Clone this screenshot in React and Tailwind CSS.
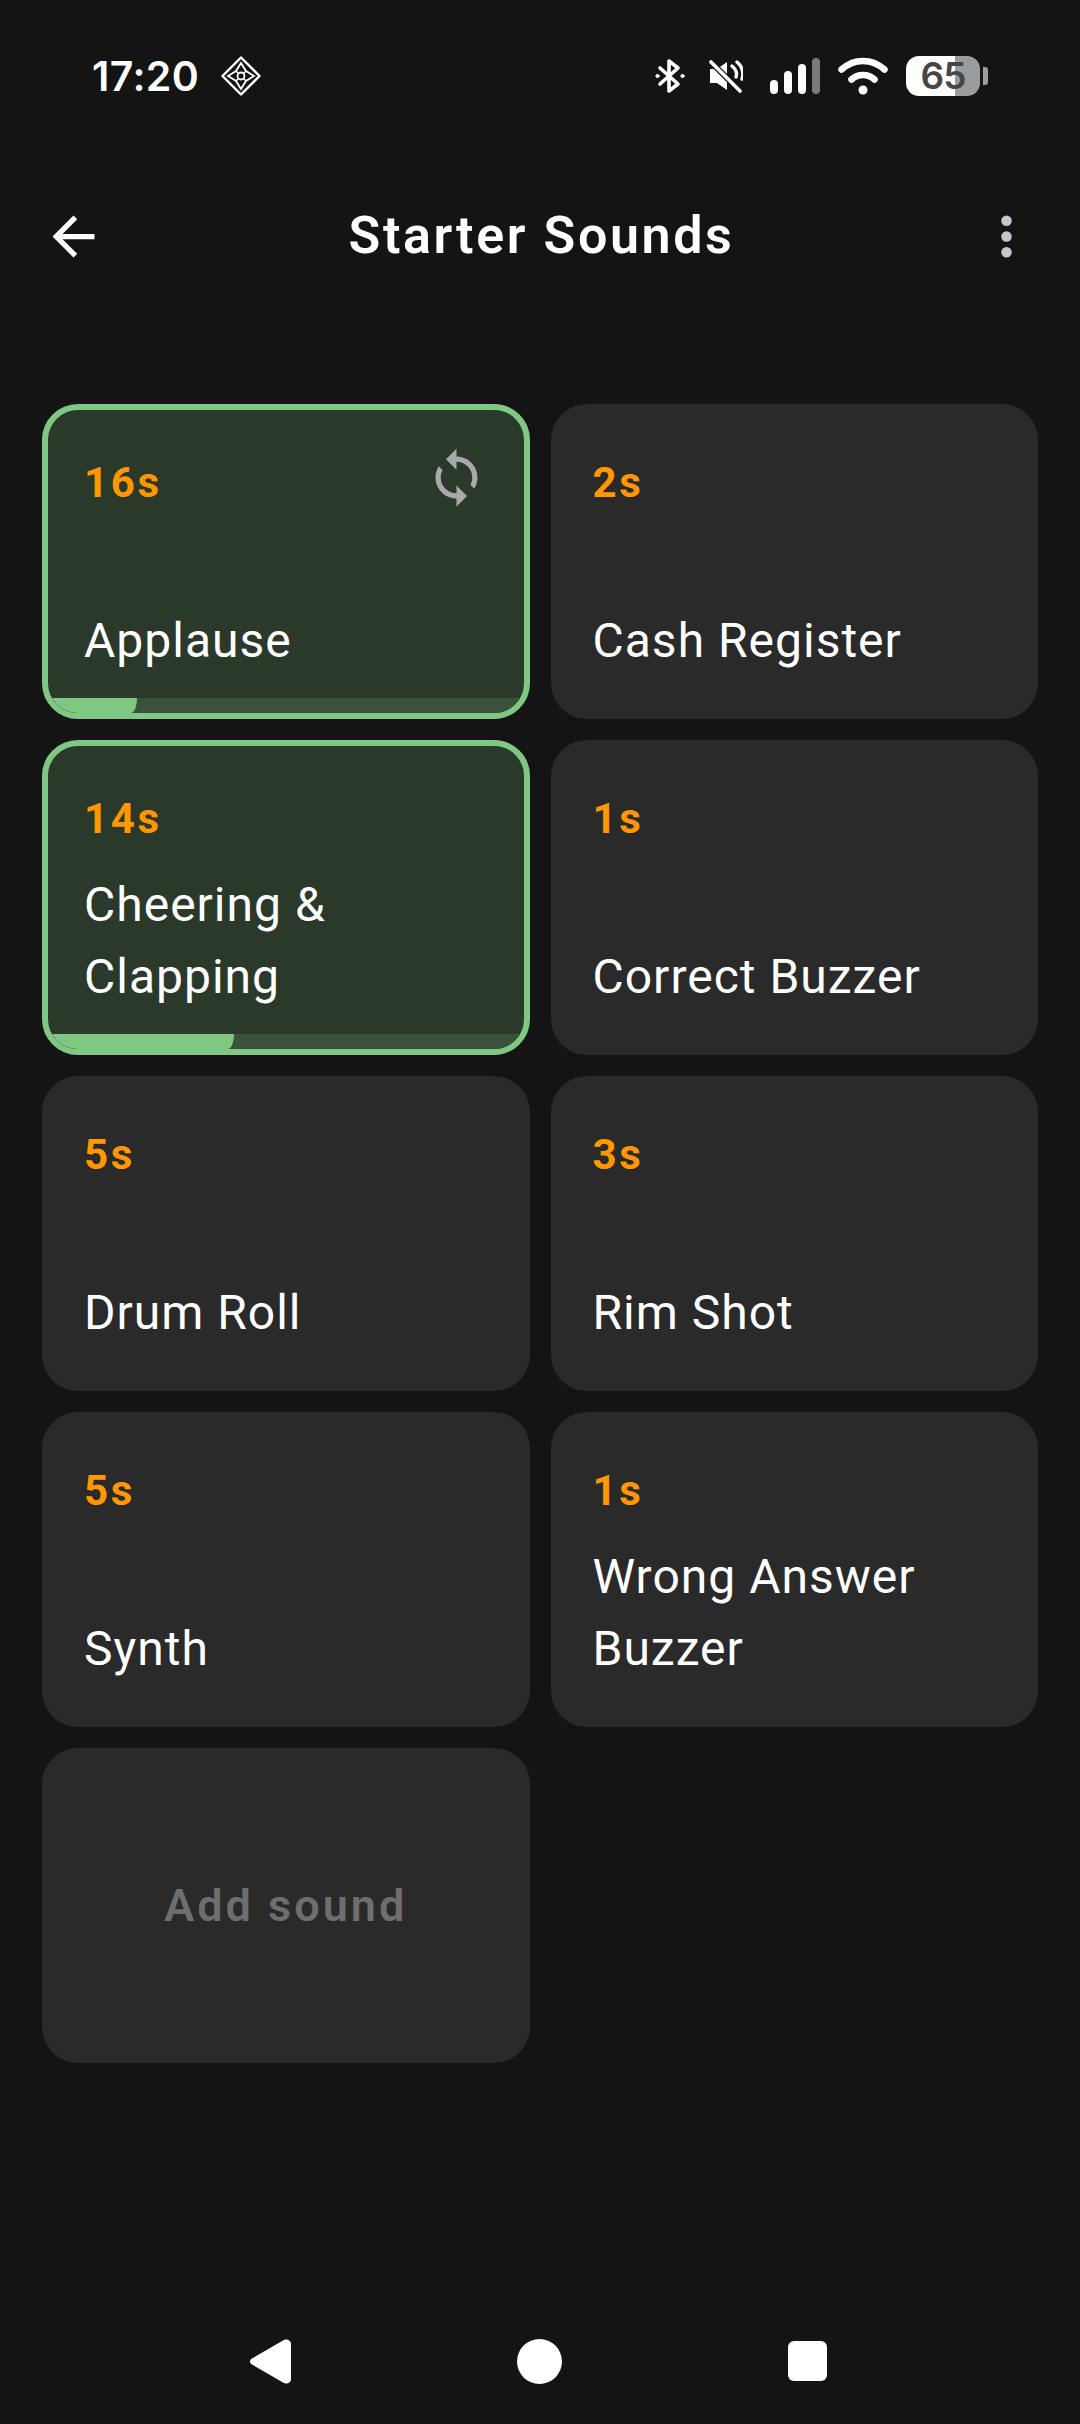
import React from "react";

const sounds = [
  { t: "16s", n: ["Applause"], sel: true, prog: "w-[89px]", loop: true },
  { t: "2s", n: ["Cash Register"] },
  { t: "14s", n: ["Cheering &", "Clapping"], sel: true, prog: "w-[186px]" },
  { t: "1s", n: ["Correct Buzzer"] },
  { t: "5s", n: ["Drum Roll"] },
  { t: "3s", n: ["Rim Shot"] },
  { t: "5s", n: ["Synth"] },
  { t: "1s", n: ["Wrong Answer", "Buzzer"] },
];

function Card({ s }) {
  return (
    <div
      className={
        "relative h-[315px] rounded-[36px] overflow-hidden flex flex-col justify-between " +
        (s.sel ? "bg-[#2b392b] border-[6px] border-[#81c784] p-[36px]" : "bg-[#2a2a2a] p-[42px]")
      }
    >
      <div className="text-[42px] leading-[73px] font-bold tracking-[2.6px] text-[#ff9800]">{s.t}</div>
      <div className="text-[48px] leading-[72px] tracking-[1px] text-white font-normal">
        {s.n.map((l) => (
          <div key={l}>{l}</div>
        ))}
      </div>
      {s.loop && (
        <svg viewBox="0 0 24 24" className="absolute top-[36px] right-[36px] w-[63px] h-[63px]" fill="#a9a9a9">
          <path d="M12 4V1L8 5l4 4V6c3.31 0 6 2.69 6 6 0 1.01-.25 1.97-.7 2.8l1.46 1.46C19.54 15.03 20 13.57 20 12c0-4.42-3.58-8-8-8zm0 14c-3.31 0-6-2.69-6-6 0-1.01.25-1.97.7-2.8L5.24 7.74C4.46 8.97 4 10.43 4 12c0 4.42 3.58 8 8 8v3l4-4-4-4v3z" />
        </svg>
      )}
      {s.sel && (
        <div className="absolute left-0 right-0 bottom-0 h-[15px] bg-[#3a523a]">
          <div className={"h-full bg-[#81c784] rounded-br-[6px_15px] " + s.prog} />
        </div>
      )}
    </div>
  );
}

function StatusBar() {
  return (
    <div className="h-[152px] pt-[52px] pl-[92px] pr-[92px] flex items-start justify-between">
      <div className="flex items-center h-[48px]">
        <span className="text-[41px] leading-[48px] font-semibold text-white font-['Inter',sans-serif] tracking-[0.4px]">17:20</span>
        <svg viewBox="0 0 40 40" className="w-[40px] h-[40px] ml-[22px]" fill="none" stroke="white">
          <path d="M20 1.5 38.5 20 20 38.5 1.5 20Z" strokeWidth="2.4" strokeLinejoin="round" />
          <path d="M20 7 25 15 33 20 25 25 20 33 15 25 7 20 15 15Z" strokeWidth="1.8" />
          <path d="M15 15 25 25M25 15 15 25" strokeWidth="1.6" />
          <circle cx="20" cy="20" r="3.5" fill="#141414" strokeWidth="1.8" />
        </svg>
      </div>
      <div className="flex items-center h-[48px]">
        <svg viewBox="0 0 30 36" className="w-[30px] h-[36px]" fill="none" stroke="white" strokeWidth="3.6" strokeLinejoin="round" strokeLinecap="round">
          <path d="M5 10 23 26 14 33V3l9 7L5 26" />
          <circle cx="2.5" cy="18" r="1.6" fill="white" strokeWidth="1" />
          <circle cx="27.5" cy="18" r="1.6" fill="white" strokeWidth="1" />
        </svg>
        <svg viewBox="0 0 34 34" className="w-[34px] h-[34px] ml-[24px]">
          <path d="M1 10h7l10-7v28l-10-7H1Z" fill="white" />
          <path d="M23 7q6 5 4 11M28 3q8 7 5 17" fill="none" stroke="white" strokeWidth="3.4" strokeLinecap="round" />
          <path d="M2 3 31 32" stroke="#141414" strokeWidth="6" />
          <path d="M2 3 31 32" stroke="white" strokeWidth="3.6" strokeLinecap="round" />
        </svg>
        <svg viewBox="0 0 50 36" className="w-[50px] h-[36px] ml-[27px]">
          <rect x="0" y="22" width="8" height="14" rx="4" fill="white" />
          <rect x="14" y="13" width="8" height="23" rx="4" fill="white" />
          <rect x="28" y="6" width="8" height="30" rx="4" fill="white" />
          <rect x="42" y="0" width="8" height="36" rx="4" fill="#7a7a7a" />
        </svg>
        <svg viewBox="0 0 50 38" className="w-[50px] h-[38px] ml-[18px]" fill="none" stroke="white" strokeWidth="6.5" strokeLinecap="round">
          <path d="M3.5 12.5C16 1 34 1 46.5 12.5" />
          <path d="M13.5 22.5C20 16.500 30 16.500 36.500 22.500" />
          <circle cx="25" cy="33" r="4.500" fill="white" stroke="none" />
        </svg>
        <div className="ml-[18px] relative w-[74px] h-[40px] rounded-[13px] bg-[linear-gradient(90deg,#ffffff_66%,#9c9c9c_66%)] flex items-center justify-center">
          <span className="text-[37px] leading-[40px] font-semibold text-[#464646] font-['Inter',sans-serif] tracking-[-1px]">65</span>
        </div>
        <div className="ml-[3px] w-[5px] h-[18px] rounded-r-[3px] bg-[#9c9c9c]" />
      </div>
    </div>
  );
}

export default function App() {
  return (
    <div className="w-[1080px] h-[2424px] bg-[#141414] flex flex-col font-['Roboto',sans-serif] overflow-hidden">
      <StatusBar />
      <div className="h-[168px] px-[42px] flex items-center justify-between">
        <svg viewBox="0 0 24 24" className="w-[63px] h-[63px]" fill="white">
          <path d="M20 11H7.830l5.590-5.590L12 4l-8 8 8 8 1.410-1.410L7.830 13H20v-2z" />
        </svg>
        <div className="text-[52px] leading-[66px] font-semibold tracking-[2.6px] text-white ml-[3px]">Starter Sounds</div>
        <svg viewBox="0 0 24 24" className="w-[63px] h-[63px]" fill="#cac4d0">
          <circle cx="12" cy="6" r="2" />
          <circle cx="12" cy="12" r="2" />
          <circle cx="12" cy="18" r="2" />
        </svg>
      </div>
      <div className="mt-[84px] px-[42px] grid grid-cols-2 gap-[21px]">
        {sounds.map((s) => (
          <Card key={s.n[0]} s={s} />
        ))}
        <div className="h-[315px] rounded-[36px] bg-[#2a2a2a] flex items-center justify-center">
          <span className="text-[45px] font-semibold tracking-[3px] text-[#6e6e6e]">Add sound</span>
        </div>
      </div>
      <div className="mt-auto h-[126px] flex items-center justify-between pl-[250px] pr-[253px]">
        <svg viewBox="0 0 41 45" className="w-[41px] h-[45px]" fill="white">
          <path d="M2 19.500 33 1.500C36 -.5 41 1 41 5V40C41 44 36 46 33 43.500L2 25.500C-.7 24 -.7 21 2 19.500Z" />
        </svg>
        <div className="w-[45px] h-[45px] rounded-full bg-white" />
        <div className="w-[39px] h-[40px] rounded-[6px] bg-white" />
      </div>
    </div>
  );
}
